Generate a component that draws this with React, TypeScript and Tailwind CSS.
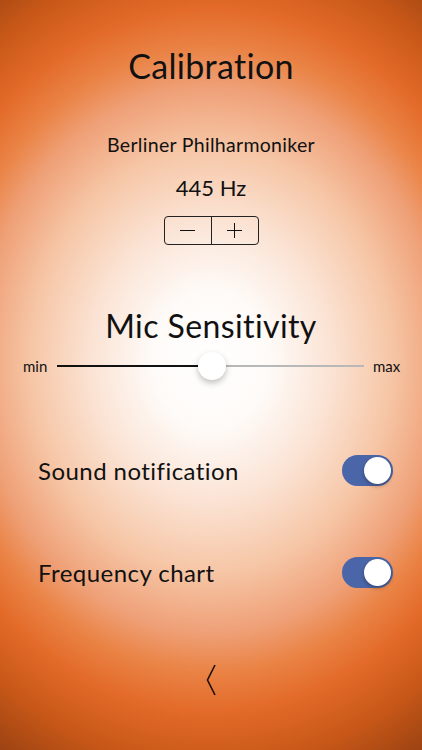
import { useState } from "react";

function Toggle({ on, onChange }: { on: boolean; onChange: () => void }) {
  return (
    <button
      type="button"
      onClick={onChange}
      className={`relative h-[31px] w-[51px] shrink-0 rounded-full transition ${
        on ? "bg-[#4b66a8]" : "bg-[#d9d9d9]"
      }`}
    >
      <span
        className={`absolute top-[2px] h-[27px] w-[27px] rounded-full bg-white shadow-[0_2px_4px_rgba(0,0,0,0.3)] transition-all ${
          on ? "left-[22px]" : "left-[2px]"
        }`}
      />
    </button>
  );
}

export default function App() {
  const [hz, setHz] = useState(445);
  const [sound, setSound] = useState(true);
  const [chart, setChart] = useState(true);
  const level = 0.505;

  return (
    <main className="flex h-[750px] w-[422px] flex-col overflow-hidden bg-[radial-gradient(ellipse_400px_470px_at_211px_360px,#ffffff_0%,#fefaf7_15%,#fbe3d4_30%,#f6c6a6_45%,#efa077_58%,#ea8447_66%,#e36a28_75%,#c85818_86%,#8f3c10_102%)] pt-[46px] font-['Lato','Noto_Sans',sans-serif] text-[#111]">
      <h1 className="h-[40px] text-center text-[34px] leading-[40px] tracking-[0.3px]">Calibration</h1>

      <p className="mt-[46px] h-[26px] text-center text-[19.5px] leading-[26px] tracking-[0.3px]">
        Berliner Philharmoniker
      </p>
      <p className="mt-[16px] h-[28px] text-center text-[22px] leading-[28px]">{hz} Hz</p>

      <div className="mt-[14px] flex justify-center">
        <div className="flex h-[29px] w-[95px] rounded-[4px] border border-[#222]">
          <button
            type="button"
            onClick={() => setHz((v) => v - 1)}
            className="flex flex-1 items-center justify-center border-r border-[#222]"
          >
            <span className="h-[1.5px] w-[15px] bg-[#111]" />
          </button>
          <button
            type="button"
            onClick={() => setHz((v) => v + 1)}
            className="relative flex flex-1 items-center justify-center"
          >
            <span className="h-[1.5px] w-[15px] bg-[#111]" />
            <span className="absolute h-[15px] w-[1.5px] bg-[#111]" />
          </button>
        </div>
      </div>

      <h2 className="mt-[61px] h-[40px] text-center text-[32px] leading-[40px] tracking-[0.4px]">Mic Sensitivity</h2>

      <div className="mt-[6px] flex h-[28px] items-center">
        <span className="w-[57px] pl-[23px] text-[15px]">min</span>
        <div className="relative flex h-[28px] w-[307px] items-center">
          <div className="h-[2px] bg-[#111]" style={{ width: `${level * 100}%` }} />
          <div className="h-[2px] flex-1 bg-[#b8b8b8]" />
          <span
            className="absolute top-0 h-[28px] w-[28px] -translate-x-1/2 rounded-full bg-white shadow-[0_3px_6px_rgba(0,0,0,0.25)]"
            style={{ left: `${level * 100}%` }}
          />
        </div>
        <span className="pl-[9px] text-[15px]">max</span>
      </div>

      <div className="mt-[75px] flex h-[31px] items-center justify-between pl-[38px] pr-[29px]">
        <span className="text-[24px] tracking-[0.45px]">Sound notification</span>
        <Toggle on={sound} onChange={() => setSound((v) => !v)} />
      </div>

      <div className="mt-[71px] flex h-[31px] items-center justify-between pl-[38px] pr-[29px]">
        <span className="text-[24px] tracking-[0.45px]">Frequency chart</span>
        <Toggle on={chart} onChange={() => setChart((v) => !v)} />
      </div>

      <div className="mt-[76px] flex justify-center">
        <svg width="12" height="32" viewBox="0 0 12 32" className="ml-[2px]">
          <path d="M9 1 L1.5 16 L9 31" fill="none" stroke="#1d0d04" strokeWidth="1.6" />
        </svg>
      </div>
    </main>
  );
}
